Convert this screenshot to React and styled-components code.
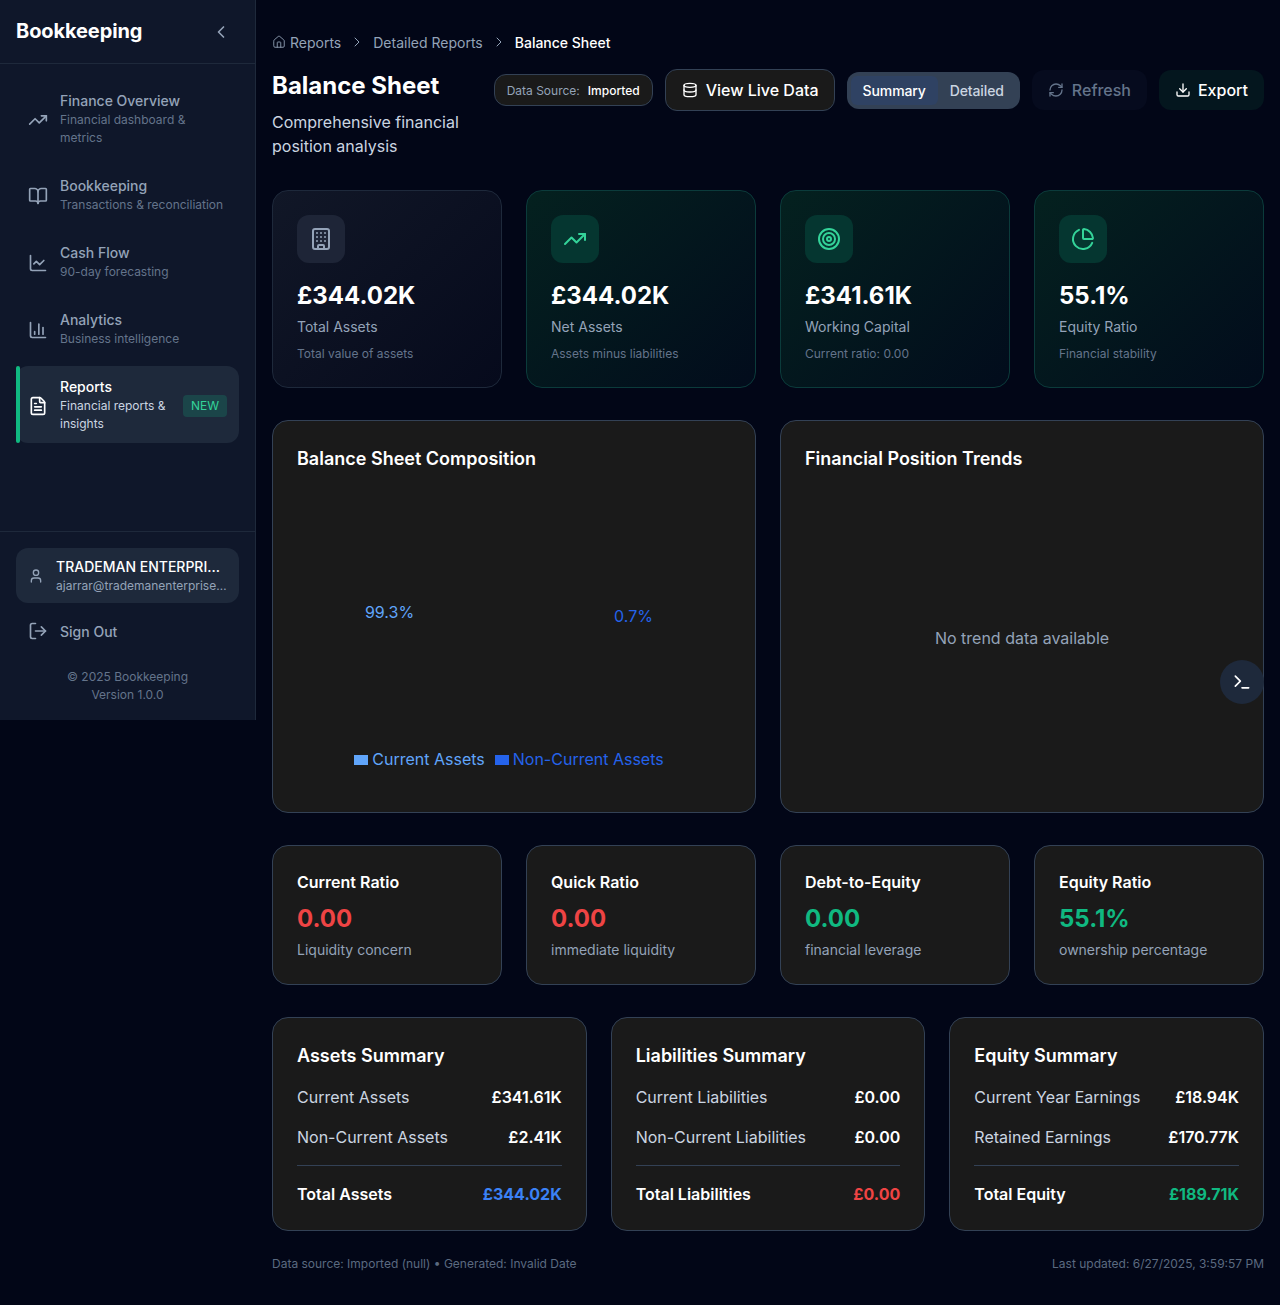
import React from 'react'
import styled, {createGlobalStyle} from 'styled-components'
import {
  TrendingUp, BookOpen, ChartLine, ChartColumn, FileText, User, LogOut, ChevronLeft, ChevronRight,
  House, Database, RefreshCw, Download, Building, Target, ChartPie, Terminal,
} from 'lucide-react'

const GlobalStyle = createGlobalStyle`
  * { box-sizing: border-box; }
  html, body { margin: 0; padding: 0; background: #020617; }
  body { font-family: Inter, "Liberation Sans", sans-serif; color: #fff; }
`

const navItems = [
  {icon: TrendingUp, name: 'Finance Overview', sub: 'Financial dashboard & metrics'},
  {icon: BookOpen, name: 'Bookkeeping', sub: 'Transactions & reconciliation'},
  {icon: ChartLine, name: 'Cash Flow', sub: '90-day forecasting'},
  {icon: ChartColumn, name: 'Analytics', sub: 'Business intelligence'},
  {icon: FileText, name: 'Reports', sub: 'Financial reports & insights', active: true, badge: 'NEW'},
]

const kpis = [
  {icon: Building, value: '£344.02K', label: 'Total Assets', note: 'Total value of assets'},
  {icon: TrendingUp, value: '£344.02K', label: 'Net Assets', note: 'Assets minus liabilities', green: true},
  {icon: Target, value: '£341.61K', label: 'Working Capital', note: 'Current ratio: 0.00', green: true},
  {icon: ChartPie, value: '55.1%', label: 'Equity Ratio', note: 'Financial stability', green: true},
]

const ratios = [
  {title: 'Current Ratio', value: '0.00', note: 'Liquidity concern', color: '#ef4444'},
  {title: 'Quick Ratio', value: '0.00', note: 'immediate liquidity', color: '#ef4444'},
  {title: 'Debt-to-Equity', value: '0.00', note: 'financial leverage', color: '#10b981'},
  {title: 'Equity Ratio', value: '55.1%', note: 'ownership percentage', color: '#10b981'},
]

const summaries = [
  {
    title: 'Assets Summary',
    rows: [['Current Assets', '£341.61K'], ['Non-Current Assets', '£2.41K']],
    total: ['Total Assets', '£344.02K'],
    color: '#3b82f6',
  },
  {
    title: 'Liabilities Summary',
    rows: [['Current Liabilities', '£0.00'], ['Non-Current Liabilities', '£0.00']],
    total: ['Total Liabilities', '£0.00'],
    color: '#ef4444',
  },
  {
    title: 'Equity Summary',
    rows: [['Current Year Earnings', '£18.94K'], ['Retained Earnings', '£170.77K']],
    total: ['Total Equity', '£189.71K'],
    color: '#10b981',
  },
]

const App = () => {
  return (
    <Page>
      <GlobalStyle />
      <Sidebar>
        <SidebarHeader>
          <Logo>Bookkeeping</Logo>
          <CollapseIcon size={20} color="#94a3b8" />
        </SidebarHeader>
        <Nav>
          {navItems.map((item) => (
            <NavItem key={item.name} $active={item.active}>
              <item.icon size={20} />
              <NavText>
                <NavName>{item.name}</NavName>
                <NavSub>{item.sub}</NavSub>
              </NavText>
              {item.badge && <Badge>{item.badge}</Badge>}
            </NavItem>
          ))}
        </Nav>
        <SidebarFooter>
          <UserCard>
            <User size={16} color="#94a3b8" />
            <UserText>
              <UserName>TRADEMAN ENTERPRISES LTD</UserName>
              <UserEmail>ajarrar@trademanenterprises.com</UserEmail>
            </UserText>
          </UserCard>
          <SignOut>
            <LogOut size={20} />
            <span>Sign Out</span>
          </SignOut>
          <Copyright>
            © 2025 Bookkeeping
            <br />
            Version 1.0.0
          </Copyright>
        </SidebarFooter>
      </Sidebar>

      <Main>
        <Breadcrumb>
          <Crumb>
            <House size={14} strokeWidth={1.5} />
            Reports
          </Crumb>
          <ChevronRight size={16} strokeWidth={1.5} />
          <Crumb>Detailed Reports</Crumb>
          <ChevronRight size={16} strokeWidth={1.5} />
          <Crumb $current>Balance Sheet</Crumb>
        </Breadcrumb>

        <Header>
          <TitleBlock>
            <Title>Balance Sheet</Title>
            <Subtitle>Comprehensive financial position analysis</Subtitle>
          </TitleBlock>
          <Actions>
            <SourceBadge>
              <span>Data Source:</span>
              <strong>Imported</strong>
            </SourceBadge>
            <LiveButton>
              <Database size={16} />
              View Live Data
            </LiveButton>
            <Toggle>
              <ToggleOption $active>Summary</ToggleOption>
              <ToggleOption>Detailed</ToggleOption>
            </Toggle>
            <RefreshButton>
              <RefreshCw size={16} />
              Refresh
            </RefreshButton>
            <ExportButton>
              <Download size={16} />
              Export
            </ExportButton>
          </Actions>
        </Header>

        <KpiGrid>
          {kpis.map((kpi) => (
            <KpiCard key={kpi.label} $green={kpi.green}>
              <KpiIcon $green={kpi.green}>
                <kpi.icon size={24} />
              </KpiIcon>
              <KpiValue>{kpi.value}</KpiValue>
              <KpiLabel>{kpi.label}</KpiLabel>
              <KpiNote>{kpi.note}</KpiNote>
            </KpiCard>
          ))}
        </KpiGrid>

        <ChartGrid>
          <Card>
            <CardTitle>Balance Sheet Composition</CardTitle>
            <ChartBox>
              <PieLabels viewBox="0 0 434 259">
                <text x="92.5" y="130" fill="#60a5fa" fontSize="16" textAnchor="middle">99.3%</text>
                <text x="336.5" y="134" fill="#2563eb" fontSize="16" textAnchor="middle">0.7%</text>
              </PieLabels>
              <Legend>
                <LegendItem $color="#60a5fa"><i />Current Assets</LegendItem>
                <LegendItem $color="#2563eb"><i />Non-Current Assets</LegendItem>
              </Legend>
            </ChartBox>
          </Card>
          <Card>
            <CardTitle>Financial Position Trends</CardTitle>
            <EmptyChart>No trend data available</EmptyChart>
          </Card>
        </ChartGrid>

        <KpiGrid>
          {ratios.map((ratio) => (
            <Card key={ratio.title}>
              <RatioTitle>{ratio.title}</RatioTitle>
              <RatioValue $color={ratio.color}>{ratio.value}</RatioValue>
              <RatioNote>{ratio.note}</RatioNote>
            </Card>
          ))}
        </KpiGrid>

        <SummaryGrid>
          {summaries.map((summary) => (
            <Card key={summary.title}>
              <CardTitle>{summary.title}</CardTitle>
              <SummaryRows>
                {summary.rows.map(([label, value]) => (
                  <SummaryRow key={label}>
                    <span>{label}</span>
                    <strong>{value}</strong>
                  </SummaryRow>
                ))}
              </SummaryRows>
              <TotalRow $color={summary.color}>
                <span>{summary.total[0]}</span>
                <strong>{summary.total[1]}</strong>
              </TotalRow>
            </Card>
          ))}
        </SummaryGrid>

        <Footer>
          <span>Data source: Imported (null) • Generated: Invalid Date</span>
          <span>Last updated: 6/27/2025, 3:59:57 PM</span>
        </Footer>
      </Main>

      <TerminalButton>
        <Terminal size={20} />
      </TerminalButton>
    </Page>
  )
}

export default App

const Page = styled.div`
  display: flex;
  align-items: flex-start;
  position: relative;
  min-height: 1305px;
  background: #020617;
`

const Sidebar = styled.aside`
  width: 256px;
  height: 720px;
  flex-shrink: 0;
  display: flex;
  flex-direction: column;
  background: #0f172a;
  border-right: 1px solid #1e293b;
`

const SidebarHeader = styled.div`
  height: 64px;
  padding: 0 24px 2px 16px;
  display: flex;
  align-items: center;
  justify-content: space-between;
  border-bottom: 1px solid #1e293b;
`

const Logo = styled.div`
  font-size: 20px;
  font-weight: 700;
  letter-spacing: -0.1px;
  color: #fff;
`

const CollapseIcon = styled(ChevronLeft)`
  margin-top: 2px;
`

const Nav = styled.nav`
  flex: 1;
  padding: 16px;
  display: flex;
  flex-direction: column;
  gap: 8px;
`

const NavItem = styled.div`
  position: relative;
  display: flex;
  align-items: center;
  gap: 12px;
  padding: 12px 12px 10px;
  border-radius: 12px;
  color: ${(p) => (p.$active ? '#fff' : '#94a3b8')};
  background: ${(p) => (p.$active ? '#1e293b' : 'transparent')};

  svg {
    flex-shrink: 0;
  }

  ${(p) => p.$active && `
    &::before {
      content: '';
      position: absolute;
      left: 0;
      top: 0;
      bottom: 0;
      width: 4px;
      background: #10b981;
      border-radius: 2px;
    }
  `}

  span {
    color: ${(p) => (p.$active ? '#cbd5e1' : '#64748b')};
  }
`

const NavText = styled.div`
  flex: 1;
  min-width: 0;
`

const NavName = styled.div`
  margin-bottom: 1px;
  font-size: 14px;
  font-weight: 500;
  line-height: 18px;
`

const NavSub = styled.span`
  display: block;
  font-size: 12px;
  line-height: 18px;
`

const Badge = styled.div`
  padding: 2px 8px;
  font-size: 12px;
  line-height: 18px;
  border-radius: 4px;
  color: #34d399;
  background: rgba(16, 185, 129, 0.2);
`

const SidebarFooter = styled.div`
  padding: 16px;
  border-top: 1px solid #1e293b;
`

const UserCard = styled.div`
  display: flex;
  align-items: center;
  gap: 12px;
  height: 55px;
  padding: 0 12px;
  border-radius: 12px;
  background: #1e293b;
`

const UserText = styled.div`
  flex: 1;
  min-width: 0;
`

const UserName = styled.div`
  font-size: 14px;
  font-weight: 500;
  line-height: 20px;
  color: #fff;
  white-space: nowrap;
  overflow: hidden;
  text-overflow: ellipsis;
`

const UserEmail = styled.div`
  font-size: 12px;
  line-height: 18px;
  color: #94a3b8;
  white-space: nowrap;
  overflow: hidden;
  text-overflow: ellipsis;
`

const SignOut = styled.div`
  display: flex;
  align-items: center;
  gap: 12px;
  margin-top: 6px;
  padding: 12px;
  font-size: 14px;
  font-weight: 500;
  line-height: 17px;
  color: #94a3b8;
`

const Copyright = styled.div`
  margin-top: 15px;
  text-align: center;
  font-size: 12px;
  line-height: 18px;
  color: #64748b;
`

const Main = styled.main`
  flex: 1;
  min-width: 0;
  padding: 32px 16px;
`

const Breadcrumb = styled.div`
  height: 20px;
  margin-bottom: 17px;
  display: flex;
  align-items: center;
  gap: 8px;
  color: #94a3b8;
`

const Crumb = styled.div`
  display: flex;
  align-items: center;
  gap: 4px;
  font-size: 14px;
  font-weight: ${(p) => (p.$current ? 500 : 400)};
  color: ${(p) => (p.$current ? '#fff' : '#94a3b8')};
`

const Header = styled.div`
  display: flex;
  align-items: flex-start;
  gap: 16px;
  margin-bottom: 32px;
`

const TitleBlock = styled.div`
  flex: 1;
  min-width: 0;
`

const Title = styled.h1`
  margin: 1px 0 8px;
  font-size: 24px;
  font-weight: 700;
  line-height: 32px;
  color: #fff;
`

const Subtitle = styled.p`
  margin: 0;
  font-size: 16px;
  line-height: 24px;
  color: #cbd5e1;
`

const Actions = styled.div`
  display: flex;
  align-items: center;
  gap: 12px;
  height: 42px;
  flex-shrink: 0;
`

const SourceBadge = styled.div`
  display: flex;
  align-items: center;
  gap: 8px;
  height: 32px;
  padding: 0 12px;
  font-size: 12px;
  color: #94a3b8;
  background: #1a1a1a;
  border: 1px solid #334155;
  border-radius: 12px;

  strong {
    font-weight: 500;
    color: #fff;
  }
`

const ActionButton = styled.button`
  display: flex;
  align-items: center;
  gap: 8px;
  height: 40px;
  padding: 0 16px;
  font-family: inherit;
  font-size: 16px;
  font-weight: 500;
  border: none;
  border-radius: 12px;
`

const LiveButton = styled(ActionButton)`
  height: 42px;
  padding: 0 15px 0 16px;
  color: #fff;
  background: #1a1a1a;
  border: 1px solid #334155;
`

const RefreshButton = styled(ActionButton)`
  color: #64748b;
  background: #060b1e;
`

const ExportButton = styled(ActionButton)`
  gap: 7px;
  color: #fff;
  background: #04161e;
`

const Toggle = styled.div`
  display: flex;
  padding: 4px;
  background: #334155;
  border-radius: 12px;
`

const ToggleOption = styled.div`
  padding: 6px 12px;
  font-size: 14px;
  font-weight: 500;
  line-height: 17px;
  letter-spacing: -0.12px;
  border-radius: 6px;
  color: ${(p) => (p.$active ? '#fff' : '#cbd5e1')};
  background: ${(p) => (p.$active ? '#2f4263' : 'transparent')};
`

const KpiGrid = styled.div`
  display: grid;
  grid-template-columns: repeat(4, 1fr);
  gap: 24px;
  margin-bottom: 32px;
`

const KpiCard = styled.div`
  height: 198px;
  padding: 24px;
  border-radius: 16px;
  border: 1px solid ${(p) => (p.$green ? '#0b3b3b' : '#1e293b')};
  background: ${(p) => (p.$green
    ? 'linear-gradient(135deg, #04211f 0%, #020c1c 100%)'
    : 'linear-gradient(135deg, #111727 0%, #060a1c 100%)')};
`

const KpiIcon = styled.div`
  width: 48px;
  height: 48px;
  display: flex;
  align-items: center;
  justify-content: center;
  border-radius: 12px;
  color: ${(p) => (p.$green ? '#34d399' : '#94a3b8')};
  background: ${(p) => (p.$green ? '#053630' : '#1e2537')};
`

const KpiValue = styled.div`
  margin-top: 17px;
  font-size: 24px;
  font-weight: 700;
  line-height: 32px;
  color: #fff;
`

const KpiLabel = styled.div`
  margin-top: 4px;
  font-size: 14px;
  line-height: 21px;
  color: #94a3b8;
`

const KpiNote = styled.div`
  margin-top: 8px;
  font-size: 12px;
  line-height: 18px;
  color: #64748b;
`

const Card = styled.div`
  padding: 24px;
  border-radius: 16px;
  background: #1a1a1a;
  border: 1px solid #334155;
`

const CardTitle = styled.h3`
  margin: 0 0 16px;
  font-size: 18px;
  font-weight: 600;
  line-height: 27px;
  color: #fff;
`

const ChartGrid = styled.div`
  display: grid;
  grid-template-columns: repeat(2, 1fr);
  gap: 24px;
  margin-bottom: 32px;
`

const ChartBox = styled.div`
  height: 300px;
`

const PieLabels = styled.svg`
  display: block;
  width: 100%;
  height: 259px;
  font-family: Inter, "Liberation Sans", sans-serif;
`

const Legend = styled.div`
  display: flex;
  justify-content: center;
  gap: 10px;
  padding-right: 10px;
`

const LegendItem = styled.div`
  display: flex;
  align-items: center;
  gap: 4px;
  font-size: 16px;
  line-height: 24px;
  color: ${(p) => p.$color};

  i {
    display: block;
    width: 14px;
    height: 10px;
    margin-top: 2px;
    background: ${(p) => p.$color};
  }
`

const EmptyChart = styled.div`
  height: 300px;
  display: flex;
  align-items: center;
  justify-content: center;
  font-size: 16px;
  color: #94a3b8;
`

const RatioTitle = styled.div`
  font-size: 16px;
  font-weight: 600;
  line-height: 24px;
  color: #fff;
`

const RatioValue = styled.div`
  margin-top: 9px;
  font-size: 24px;
  font-weight: 700;
  line-height: 32px;
  color: ${(p) => p.$color};
`

const RatioNote = styled.div`
  margin-top: 4px;
  font-size: 14px;
  line-height: 21px;
  color: #94a3b8;
`

const SummaryGrid = styled.div`
  display: grid;
  grid-template-columns: repeat(3, 1fr);
  gap: 24px;
  margin-bottom: 24px;
`

const SummaryRows = styled.div`
  display: flex;
  flex-direction: column;
  gap: 16px;
  padding-bottom: 16px;
  border-bottom: 1px solid #334155;
`

const SummaryRow = styled.div`
  display: flex;
  justify-content: space-between;
  font-size: 16px;
  line-height: 24px;
  color: #cbd5e1;

  strong {
    font-weight: 600;
    color: #fff;
  }
`

const TotalRow = styled.div`
  display: flex;
  justify-content: space-between;
  margin-top: 16px;
  font-size: 16px;
  font-weight: 600;
  line-height: 24px;
  color: #fff;

  strong {
    font-weight: 700;
    color: ${(p) => p.$color};
  }
`

const Footer = styled.div`
  display: flex;
  justify-content: space-between;
  font-size: 12px;
  line-height: 18px;
  color: #5b6a80;
`

const TerminalButton = styled.div`
  position: absolute;
  top: 660px;
  right: 16px;
  width: 44px;
  height: 44px;
  display: flex;
  align-items: center;
  justify-content: center;
  border-radius: 50%;
  color: #fff;
  background: #1e293b;
`
